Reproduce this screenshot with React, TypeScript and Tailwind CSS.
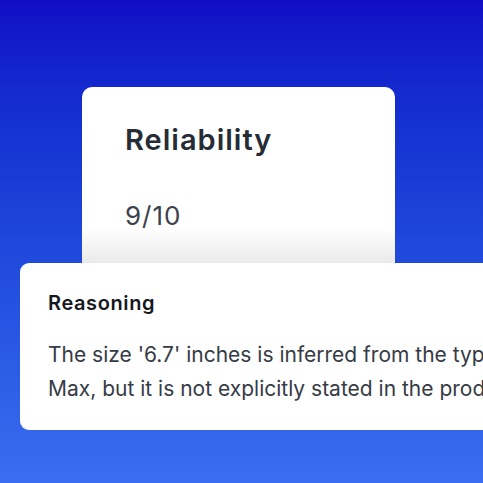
import React from "react";

export default function App() {
  return (
    <div
      className="w-[483px] h-[483px] overflow-hidden bg-gradient-to-b from-[#120cc6] to-[#3a6df0] pt-[87px]"
      style={{ fontFamily: "Inter, 'Noto Sans', sans-serif" }}
    >
      <div className="ml-[82px] w-[313px] h-[176px] rounded-t-[10px] bg-gradient-to-b from-white from-[80%] to-[#eaeaea] pl-[43px] pt-[35px]">
        <div className="text-[29px] leading-[36px] font-semibold text-[#262c36] tracking-[1px]">
          Reliability
        </div>
        <div className="mt-[43px] text-[26px] leading-[30px] text-[#3b414d] tracking-[1px]">9/10</div>
      </div>
      <div className="ml-[20px] w-[640px] h-[167px] rounded-[9px] bg-white pl-[28px] pt-[28px]">
        <div className="text-[20px] leading-[24px] font-semibold text-[#15181e] tracking-[0.6px]">Reasoning</div>
        <div className="mt-[23px] text-[21px] leading-[34px] text-[#363b46] whitespace-nowrap">
          <div>The size '6.7' inches is inferred from the typical size of iPhone 15 Pro</div>
          <div>Max, but it is not explicitly stated in the product description.</div>
        </div>
      </div>
    </div>
  );
}
